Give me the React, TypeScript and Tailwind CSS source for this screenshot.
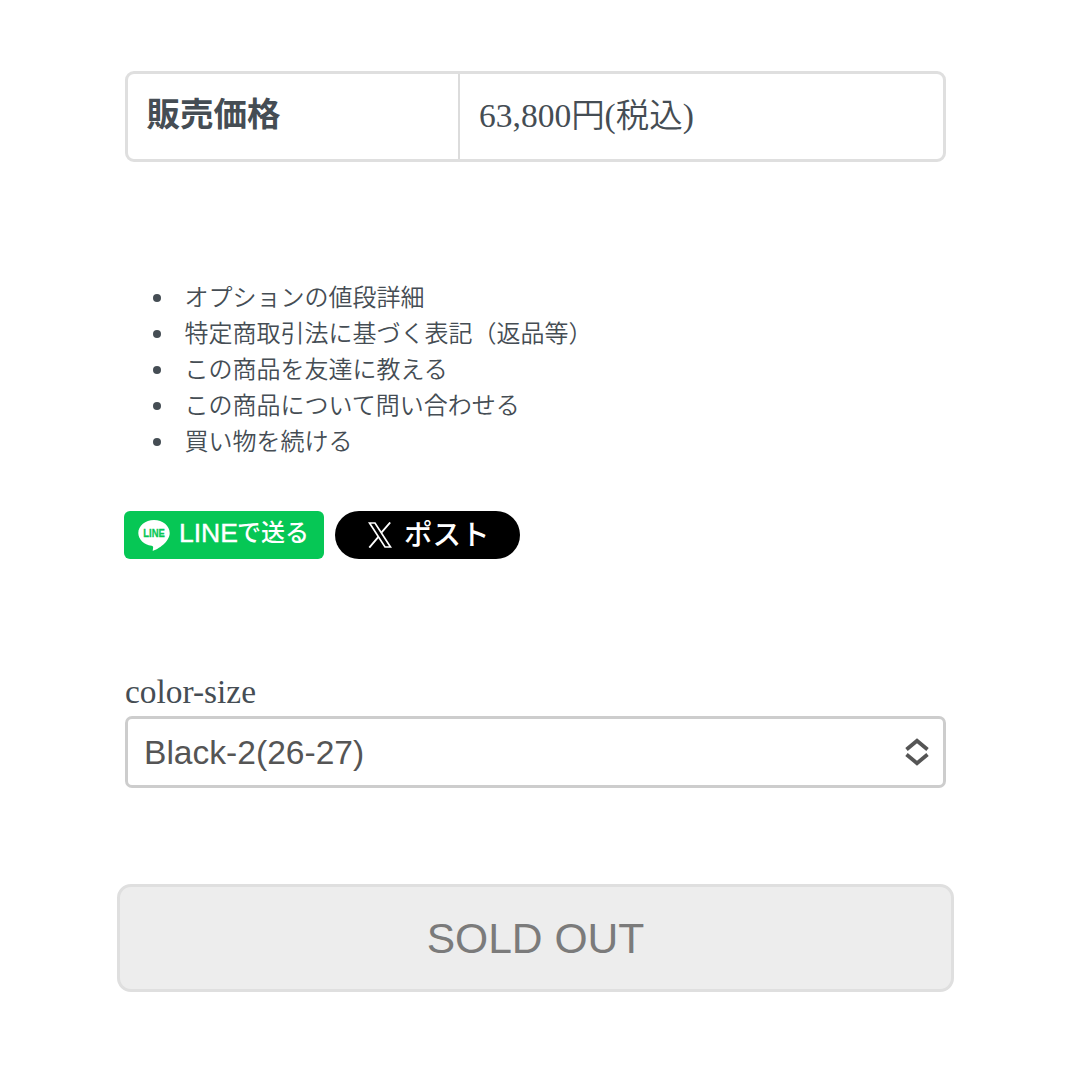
import React, { useState } from 'react';

const links = [
  'オプションの値段詳細',
  '特定商取引法に基づく表記（返品等）',
  'この商品を友達に教える',
  'この商品について問い合わせる',
  '買い物を続ける',
];

function LineIcon() {
  return (
    <svg viewBox="0 0 32 31" className="w-8 h-[31px] shrink-0">
      <path
        d="M16 0C7.300 0 .300 5.800 .300 13c0 6.400 5.700 11.800 13.300 12.800 1.200.2 1.700.8 1.500 2L14.700 31C20 29.200 31.700 22 31.700 13 31.700 5.800 24.700 0 16 0z"
        fill="#fff"
      />
      <text
        x="16"
        y="17"
        textAnchor="middle"
        textLength="21.500"
        lengthAdjust="spacingAndGlyphs"
        fontFamily="'Liberation Sans', sans-serif"
        fontWeight="700"
        fontSize="10.500"
        fill="#06c755"
        stroke="#06c755"
        strokeWidth="0.3"
      >
        LINE
      </text>
    </svg>
  );
}

function XIcon() {
  return (
    <svg viewBox="0 0 24 26" className="w-6 h-[26px] shrink-0" fill="none" stroke="#fff" strokeWidth="1.700">
      <path d="M1.500 1H7L22.500 25H17z" />
      <path d="M22.200.500L13.600 10.400M10.600 14.700L1.300 25.600" strokeWidth="1.900" />
    </svg>
  );
}

export default function App() {
  const [variant] = useState('Black-2(26-27)');

  return (
    <div className="h-[1080px] w-[1080px] bg-white overflow-hidden pt-[71px] pl-[125px] text-[#454d54] font-['Liberation_Serif','Noto_Sans_CJK_JP',serif]">
      {/* Price */}
      <div className="flex w-[821px] h-[91px] rounded-[9px] border-3 border-[#dfdfdf] text-[33.500px] leading-[48px]">
        <div className="w-[332px] border-r-2 border-[#dcdcdc] pl-[18.500px] pt-[14px] font-bold font-['Noto_Sans_CJK_JP',sans-serif]">
          販売価格
        </div>
        <div className="flex-1 pl-[19px] pt-[18px] font-[350]">63,800円(税込)</div>
      </div>

      {/* Links */}
      <ul className="mt-[117px] text-2xl leading-9 font-[350] font-['Noto_Sans_CJK_JP',sans-serif]">
        {links.map((link) => (
          <li key={link} className="flex h-9 items-start pl-7">
            <span className="mt-[15px] mr-[23.500px] size-2 rounded-full bg-[#454d54]" />
            <a href="#" className="-mt-px">{link}</a>
          </li>
        ))}
      </ul>

      {/* Share buttons */}
      <div className="mt-[52px] -ml-px flex h-12 gap-[11px] text-white font-['Liberation_Sans','Noto_Sans_CJK_JP',sans-serif]">
        <a href="#" className="flex w-[200px] items-center rounded-md bg-[#06c755] pl-[14px]">
          <LineIcon />
          <span className="ml-[9px] flex whitespace-nowrap font-medium leading-[48px] -mt-[4px]">
            <span className="text-[26.500px] [-webkit-text-stroke:0.4px_white]">LINE</span>
            <span className="text-[24px] -ml-px">で送る</span>
          </span>
        </a>
        <a href="#" className="flex w-[185px] items-center rounded-full bg-black pl-[33px]">
          <XIcon />
          <span className="ml-3 -mt-px text-[28.500px] leading-[48px] font-medium">ポスト</span>
        </a>
      </div>

      {/* Variant */}
      <div className="mt-[112px] h-[45px] text-[33.400px] leading-[42px]">color-size</div>
      <button className="flex w-[821px] h-[72px] items-center justify-between rounded-[7px] border-3 border-[#cdcdcd] bg-white pl-[16px] pr-[14px] text-[33.600px] text-[#555] font-['Liberation_Sans',sans-serif]">
        <span className="pt-0.5">{variant}</span>
        <svg viewBox="0 0 24 28" className="w-6 h-7" fill="none" stroke="#555" strokeWidth="3.800">
          <path d="M1.500 11.500L12 2.800l10.500 8.700M1.500 16.500L12 25.200l10.500-8.700" />
        </svg>
      </button>

      <button
        disabled
        className="mt-24 -ml-2 block w-[837px] h-[108px] rounded-[14px] border-3 border-[#dfdfdf] bg-[#ededed] pt-0.5 text-[42.600px] text-[#7b7b7b] font-['Liberation_Sans',sans-serif]"
      >
        SOLD OUT
      </button>
    </div>
  );
}
